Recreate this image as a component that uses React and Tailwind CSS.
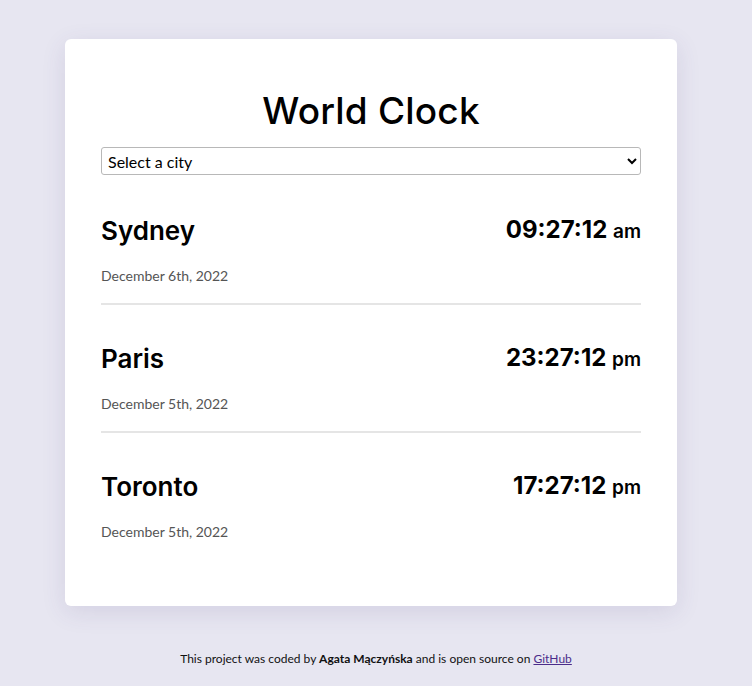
import React from 'react';

const cities = [
  { name: 'Sydney', date: 'December 6th, 2022', time: '09:27:12', period: 'am' },
  { name: 'Paris', date: 'December 5th, 2022', time: '23:27:12', period: 'pm' },
  { name: 'Toronto', date: 'December 5th, 2022', time: '17:27:12', period: 'pm' },
];

export default function App() {
  return (
    <div className="min-h-screen bg-[#e7e6f1] pt-[39px] font-['Lato',sans-serif]">
      <div className="ml-[65px] w-[612px] bg-white rounded-md shadow-[0_6px_24px_rgba(70,60,120,0.12)] px-9 pt-[52px] pb-[47px]">
        <h1 className="text-center text-[37px] leading-[40px] font-medium text-black font-['Inter',sans-serif] tracking-[0.2px]">
          World Clock
        </h1>
        <select className="mt-4 block w-full h-7 border border-[#b8b8b8] rounded-[3px] px-0.5 text-base text-black bg-white">
          <option>Select a city</option>
        </select>
        <div className="mt-5">
          {cities.map((c, i) => (
            <div key={c.name} className={i < cities.length - 1 ? 'border-b-2 border-[#e5e5e5]' : ''}>
              <div className={`flex justify-between items-start ${i === 0 ? 'pt-[20px]' : 'pt-[38px]'} pb-[17px]`}>
                <div>
                  <h2 className="text-[26px] leading-[32px] font-semibold text-black font-['Inter',sans-serif]">{c.name}</h2>
                  <div className="mt-[19px] text-[14px] leading-[20px] text-[#555]">{c.date}</div>
                </div>
                <div className="-mt-[1px] text-[24px] leading-[32px] font-bold text-black font-['Inter',sans-serif]">
                  {c.time} <span className="text-[19px] font-semibold">{c.period}</span>
                </div>
              </div>
            </div>
          ))}
        </div>
      </div>
      <p className="mt-[44px] text-center text-[12px] text-[#111]">
        This project was coded by <strong className="font-bold">Agata Mączyńska</strong> and is open source on{' '}
        <a href="#" className="underline text-[#4b2c8a]">GitHub</a>
      </p>
    </div>
  );
}
